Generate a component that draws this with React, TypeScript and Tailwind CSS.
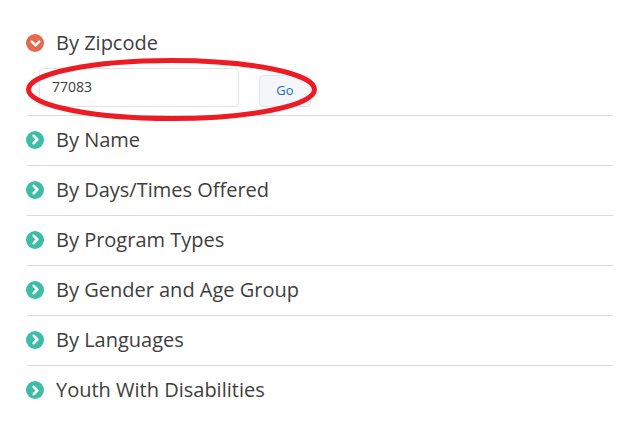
import { ChevronDown, ChevronRight } from 'lucide-react';

const rows = [
  'By Name',
  'By Days/Times Offered',
  'By Program Types',
  'By Gender and Age Group',
  'By Languages',
  'Youth With Disabilities',
];

function RowIcon({ open }: { open?: boolean }) {
  return (
    <span
      className={`-ml-px flex h-[18px] w-[18px] shrink-0 items-center justify-center rounded-full text-white ${
        open ? 'bg-[#e4694f]' : 'bg-[#3dbda7]'
      }`}
    >
      {open ? <ChevronDown size={15} strokeWidth={4} /> : <ChevronRight size={15} strokeWidth={4} />}
    </span>
  );
}

export default function App() {
  return (
    <div className="relative h-[427px] w-[636px] overflow-hidden bg-white pl-[27px] pr-[23px] pt-[18px] font-['Open_Sans',sans-serif] text-[#3e3e3c]">
      {/* By Zipcode - open section */}
      <div className="h-[98px] border-b border-[#dddbda]">
        <div className="flex h-[50px] items-center gap-3">
          <RowIcon open />
          <span className="text-[20px] leading-none">By Zipcode</span>
        </div>
        <div className="flex items-start">
          <input
            readOnly
            value="77083"
            className="ml-3 h-[39px] w-[200px] rounded border border-[#e3e3e3] bg-white pb-[2px] pl-[12px] text-[14px] text-[#3e3e3c] outline-none"
          />
          <button className="ml-5 mt-[7px] h-[32px] w-[52px] rounded border border-[#e3e5ea] bg-[#f4f6f9] text-[13px] text-[#1b6fb5]">
            Go
          </button>
        </div>
      </div>

      {rows.map((label, i) => (
        <div
          key={label}
          className={`flex h-[50px] items-center gap-3 pb-[2px] ${i < rows.length - 1 ? 'border-b border-[#dddbda]' : ''}`}
        >
          <RowIcon />
          <span className="text-[20px] leading-none">{label}</span>
        </div>
      ))}

      {/* hand-drawn red ellipse over the zipcode field */}
      <svg className="absolute left-[20px] top-[52px]" width="304" height="76" viewBox="0 0 304 76" fill="none">
        <ellipse cx="151.5" cy="37.5" rx="143" ry="29" stroke="#ed1c24" strokeWidth="5" />
      </svg>
    </div>
  );
}
